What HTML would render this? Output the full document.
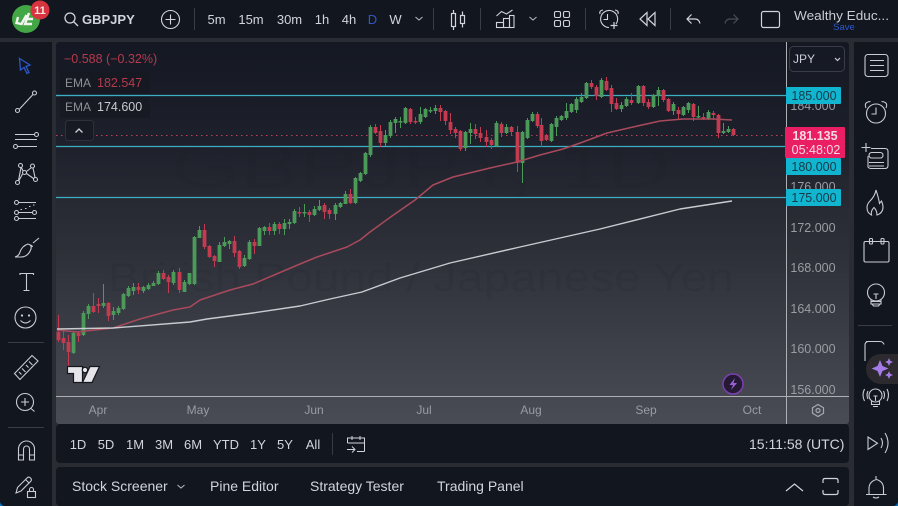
<!DOCTYPE html>
<html>
<head>
<meta charset="utf-8">
<style>
html,body{margin:0;padding:0;width:898px;height:506px;overflow:hidden;background:#2a2c34}
svg{display:block}
text{font-family:"Liberation Sans",sans-serif}
</style>
</head>
<body>
<svg width="898" height="506" viewBox="0 0 898 506" xmlns="http://www.w3.org/2000/svg">
<defs>
<linearGradient id="bg" x1="0" y1="42" x2="0" y2="424" gradientUnits="userSpaceOnUse">
<stop offset="0" stop-color="#141823"/>
<stop offset="0.25" stop-color="#1d202a"/>
<stop offset="0.55" stop-color="#2e3039"/>
<stop offset="0.8" stop-color="#3d3f49"/>
<stop offset="1" stop-color="#494b55"/>
</linearGradient>
</defs>
<rect width="898" height="506" fill="#2a2c34"/>
<!-- panels -->
<rect x="0" y="0" width="898" height="38" fill="#12161f"/>
<rect x="0" y="42" width="52" height="464" fill="#12161f"/>
<rect x="854" y="42" width="44" height="464" fill="#12161f"/>
<rect x="56" y="42" width="793" height="382" rx="3" fill="url(#bg)"/>
<rect x="56" y="424" width="793" height="39" rx="4" fill="#12161f"/>
<rect x="56" y="467" width="793" height="39" rx="4" fill="#12161f"/>
<path d="M0 502q1 3 4 4H0z" fill="#0b6fb8"/>
<path d="M898 502q-1 3-4 4h4z" fill="#0b6fb8"/>

<!-- watermark -->
<g fill="#000" text-anchor="middle">
<text x="421" y="188" font-size="62" fill-opacity=".025" textLength="500" lengthAdjust="spacingAndGlyphs">GBPJPY, 1D</text>
<text x="421" y="291" font-size="40" fill-opacity=".045" textLength="626" lengthAdjust="spacingAndGlyphs">British Pound / Japanese Yen</text>
</g>

<!-- horizontal levels -->
<path d="M56 95.5H786M56 146.5H786M56 197.5H786" stroke="#3eaec4" stroke-width="1.2" fill="none"/>
<path d="M56 135.5H786" stroke="#c2405f" stroke-width="1" stroke-dasharray="1.5 3.5" fill="none"/>

<!-- candles green -->
<path fill="none" stroke="#4c9a5a" stroke-width="1" d="M73.5 331V354M83.5 311V336M88.5 304V319M103.5 284V308M113.5 307V320M118.5 306V315M123.5 293V310M128.5 286V297M133.5 283V295M143.5 286V293M148.5 283V290M153.5 281V286M158.5 271V285M173.5 270V285M184.5 280V292M189.5 273V285M194.5 236V285M199.5 226V238M219.5 242V262M224.5 237V247M229.5 240V249M244.5 255V267M249.5 240V260M259.5 227V246M264.5 226V235M274.5 222V235M284.5 219V235M289.5 219V229M294.5 209V224M304.5 204V217M314.5 206V216M319.5 200V211M335.5 203V220M340.5 202V208M345.5 191V204M355.5 177V204M360.5 172V182M365.5 152V175M370.5 125V157M385.5 130V146M390.5 120V138M395.5 117V133M400.5 117V128M405.5 107V124M420.5 107V124M425.5 108V118M430.5 107V113M435.5 105V114M465.5 131V151M470.5 123V144M496.5 121V147M506.5 124V134M522.5 131V183M527.5 118V139M532.5 112V122M551.5 123V142M556.5 116V136M561.5 115V121M566.5 103V120M571.5 103V113M576.5 97V113M581.5 93V103M586.5 82V99M601.5 78V98M621.5 102V112M626.5 97V107M638.5 85V104M653.5 94V108M658.5 87V106M673.5 102V115M683.5 106V116M688.5 102V113M698.5 106V118M708.5 110V120M723.5 123V134M728.5 126V133"/>
<path fill="none" stroke="#4c9a5a" stroke-width="3.8" d="M73.5 333V353M83.5 313V335M88.5 306V314M103.5 303V306M113.5 311V315M118.5 308V313M123.5 294V309M128.5 288V296M133.5 287V291M143.5 287V291M148.5 285V289M153.5 283V286M158.5 273V284M173.5 272V283M184.5 282V292M189.5 273V284M194.5 237V284M199.5 230V238M219.5 245V262M224.5 242V246M229.5 241V244M244.5 258V266M249.5 242V259M259.5 228V246M264.5 227V231M274.5 224V231M284.5 223V229M289.5 222V224M294.5 211V223M304.5 212V213.5M314.5 209V215M319.5 206V210M335.5 205V214M340.5 203V207M345.5 194V204M355.5 178V203M360.5 173V181M365.5 153V174M370.5 127V155M385.5 135V143M390.5 122V136M395.5 119V123M400.5 121V122.5M405.5 108V123M420.5 114V122M425.5 109V117M430.5 110V111.5M435.5 108V111M465.5 132V148M470.5 129V133M496.5 123V146M506.5 127V133M522.5 132V163M527.5 120V138M532.5 114V121M551.5 124V141M556.5 118V127M561.5 116V120M566.5 111V118M571.5 104V112M576.5 99V110M581.5 97V102M586.5 83V98M601.5 80V97M621.5 105V109M626.5 99V106M638.5 86V103M653.5 95V107M658.5 90V96M673.5 104V111M683.5 107V115M688.5 103V110M698.5 116V117.5M708.5 112V119M723.5 131V133M728.5 129V132"/>
<!-- candles red -->
<path fill="none" stroke="#c43a50" stroke-width="1" d="M58.5 315V342M63.5 331V350M68.5 335V367M78.5 331V342M93.5 293V313M98.5 298V313M108.5 302V321M138.5 283V294M163.5 270V280M168.5 275V293M179.5 268V293M204.5 224V249M209.5 245V258M214.5 255V267M234.5 236V257M239.5 250V269M254.5 239V254M269.5 223V235M279.5 222V234M299.5 207V217M309.5 210V222M324.5 203V219M329.5 208V219M350.5 189V204M375.5 124V134M380.5 125V147M410.5 108V124M415.5 117V124M440.5 105V121M445.5 110V125M450.5 113V134M455.5 127V138M460.5 130V151M475.5 124V139M480.5 127V142M486.5 130V147M491.5 138V149M501.5 122V137M511.5 126V135M517.5 126V172M537.5 112V128M541.5 118V147M546.5 134V141M591.5 80V89M596.5 85V100M606.5 77V91M611.5 85V112M616.5 98V110M631.5 93V105M643.5 85V106M648.5 99V109M663.5 89V102M668.5 98V112M678.5 107V120M693.5 103V121M703.5 113V120M713.5 111V120M718.5 114V138M733.5 128V136"/>
<path fill="none" stroke="#c43a50" stroke-width="3.8" d="M58.5 332V340M63.5 338V343M68.5 342V352M78.5 333V336M93.5 306V312M98.5 304V306M108.5 303V316M138.5 287V290M163.5 273V279M168.5 277V282M179.5 272V290M204.5 230V247M209.5 246V257M214.5 256V261M234.5 241V253M239.5 251V267M254.5 242V246M269.5 227V231M279.5 224V229M299.5 212V213.5M309.5 212V215M324.5 205V212M329.5 210V214M350.5 194V203M375.5 127V133M380.5 131V143M410.5 109V122M415.5 121V122.5M440.5 108V112M445.5 111V121M450.5 122V130M455.5 129V133M460.5 131V149M475.5 129V134M480.5 133V138M486.5 137V142M491.5 140V145M501.5 124V133M511.5 127V132M517.5 132V163M537.5 114V126M541.5 125V141M546.5 135V140M591.5 83V87M596.5 87V96M606.5 81V90M611.5 88V104M616.5 103V109M631.5 100V103M643.5 86V103M648.5 102V107M663.5 90V100M668.5 99V111M678.5 110V114M693.5 104V117M703.5 117V119M713.5 113V115M718.5 115V133M733.5 129V135"/>

<!-- EMAs -->
<path fill="none" stroke="#a94a5c" stroke-width="1.5" stroke-linejoin="round" d="M57 330L77 332L113 328L140 319L173 310L190 307L200 300L230 290L253 284L300 264L317 257L347 247L360 240L370 232L392 216L415 200L433 185L453 177L490 168L517 162L540 155L563 149L583 142L607 133L633 127L660 121L683 119L713 119L732 120"/>
<path fill="none" stroke="#c9cbd0" stroke-width="1.4" stroke-linejoin="round" d="M57 329L113 328L190 322L207 319L253 313L300 306L330 299L362 292L400 278L450 263L520 247L600 229L680 209L732 201"/>

<!-- axis lines -->
<path d="M56 396.500H849M786.500 42V424" stroke="#aeb0b6" stroke-width="1" fill="none"/>

<!-- axis labels -->
<g font-size="12.500" fill="#9b9da3" text-anchor="middle">
<text x="813" y="110">184.000</text>
<text x="813" y="191">176.000</text>
<text x="813" y="232">172.000</text>
<text x="813" y="272">168.000</text>
<text x="813" y="313">164.000</text>
<text x="813" y="353">160.000</text>
<text x="813" y="394">156.000</text>
</g>
<g fill="#12b5d0">
<rect x="786" y="87" width="55" height="17" rx="1"/>
<rect x="786" y="158" width="55" height="17" rx="1"/>
<rect x="786" y="189" width="55" height="17" rx="1"/>
</g>
<g font-size="12.500" fill="#173a46" text-anchor="middle">
<text x="814" y="100">185.000</text>
<text x="814" y="171">180.000</text>
<text x="814" y="202">175.000</text>
</g>
<rect x="785" y="127" width="60" height="31" rx="1" fill="#e91e63"/>
<text x="815" y="140" font-size="12.500" font-weight="bold" fill="#f4dbe3" text-anchor="middle">181.135</text>
<text x="816" y="154" font-size="12.500" fill="#f4dbe3" text-anchor="middle">05:48:02</text>

<rect x="789.500" y="46.500" width="55" height="25" rx="4" fill="none" stroke="#3a3d47"/>
<text x="793" y="63" font-size="12" fill="#c9ccd3">JPY</text>
<path d="M835 58l2.500 2.500 2.500-2.500" fill="none" stroke="#c9ccd3" stroke-width="1.200"/>

<!-- legend -->
<rect x="60" y="72" width="90" height="46" fill="#15181f" fill-opacity=".55"/>
<path d="M56 95.500H150" stroke="#3eaec4" stroke-width="1.200"/>
<text x="64" y="63" font-size="12.500" fill="#b53a4d">−0.588 (−0.32%)</text>
<text x="65" y="87" font-size="12" fill="#8e9096">EMA</text>
<text x="97" y="87" font-size="12.500" fill="#b53a4d">182.547</text>
<text x="65" y="111" font-size="12" fill="#8e9096">EMA</text>
<text x="97" y="111" font-size="12.500" fill="#c8cad0">174.600</text>
<rect x="65.500" y="120.500" width="28" height="20" rx="3" fill="#171a22" stroke="#2e313a"/>
<path d="M75.500 132.500l3.500-3.500 3.500 3.500" fill="none" stroke="#d1d4dc" stroke-width="1.300"/>

<!-- TV logo -->
<g fill="#e6e6ea" stroke="#15171e" stroke-width="1.200">
<path d="M67.500 366.500H82.500V382.500H73.500V373.500H67.500Z"/>
<circle cx="85" cy="370" r="2.700"/>
<path d="M90 366.500H99.500L92 382.500H82.500Z"/>
</g>
<!-- purple bolt -->
<circle cx="733" cy="384" r="10" fill="#241a33" stroke="#7d3fb0" stroke-width="1.500"/>
<path d="M735 378L729.500 385H733L731 390L737 383H733.500Z" fill="#9c5fd6"/>

<!-- time axis -->
<g font-size="12" fill="#9a9ca3" text-anchor="middle">
<text x="98" y="414">Apr</text>
<text x="198" y="414">May</text>
<text x="314" y="414">Jun</text>
<text x="424" y="414">Jul</text>
<text x="531" y="414">Aug</text>
<text x="646" y="414">Sep</text>
<text x="752" y="414">Oct</text>
</g>
<path d="M818 404.500l5.500 3.200v5.600l-5.500 3.200-5.500-3.200v-5.600z" fill="none" stroke="#a5a7ad" stroke-width="1.200"/>
<circle cx="818" cy="410.500" r="2" fill="none" stroke="#a5a7ad" stroke-width="1.200"/>

<!-- range bar -->
<g font-size="13" fill="#d1d4dc" text-anchor="middle">
<text x="78" y="449">1D</text>
<text x="106" y="449">5D</text>
<text x="135" y="449">1M</text>
<text x="164" y="449">3M</text>
<text x="193" y="449">6M</text>
<text x="226" y="449">YTD</text>
<text x="258" y="449">1Y</text>
<text x="285" y="449">5Y</text>
<text x="313" y="449">All</text>
</g>
<path d="M332.500 433V455" stroke="#373a44"/>
<g fill="none" stroke="#d1d4dc" stroke-width="1">
<path d="M352 438H347.500V443M347.500 443H364.500M364.500 451.500V438H360M352 436V440M360 436V440M352 438H360"/>
<path d="M347 449.500H355M352 446.500l3 3-3 3M357 451.500H364.500"/>
</g>
<text x="749" y="449" font-size="14" fill="#d1d4dc">15:11:58 (UTC)</text>

<!-- bottom bar -->
<g font-size="14" fill="#d1d4dc">
<text x="72" y="491">Stock Screener</text>
<text x="210" y="491">Pine Editor</text>
<text x="310" y="491">Strategy Tester</text>
<text x="437" y="491">Trading Panel</text>
</g>
<path d="M177.500 485l3.500 3 3.500-3" fill="none" stroke="#aeb1b8" stroke-width="1.100"/>
<path d="M786 491l8.500-7 8.500 7" fill="none" stroke="#d1d4dc" stroke-width="1.200"/>
<path d="M823 483v-2.500q0-2 2-2h11q2 0 2 2v2.500M823 490v2.500q0 2 2 2h11q2 0 2-2v-2.500" fill="none" stroke="#d1d4dc" stroke-width="1.200"/>

<!-- top bar: logo -->
<circle cx="26" cy="19" r="14" fill="#43a745"/>
<path d="M18 17l-1.500 6 5 1 5-9M29 13l-4 11h7M27 19h6" fill="none" stroke="#f2f5ef" stroke-width="2.400"/>
<circle cx="40" cy="10" r="9.500" fill="#d8343f"/>
<text x="40" y="14" font-size="11" font-weight="bold" fill="#f5e6e6" text-anchor="middle">11</text>
<!-- search -->
<circle cx="70" cy="18" r="5" fill="none" stroke="#d1d4dc" stroke-width="1.300"/>
<path d="M73.500 21.500L78 26" stroke="#d1d4dc" stroke-width="1.300"/>
<text x="82" y="24" font-size="13" font-weight="bold" fill="#d1d4dc">GBPJPY</text>
<!-- plus -->
<circle cx="170.500" cy="19.500" r="9" fill="none" stroke="#d1d4dc" stroke-width="1.100"/>
<path d="M170.500 14.500v10M165.500 19.500h10" stroke="#d1d4dc" stroke-width="1.100"/>
<path d="M194.500 8V30M433.500 8V30M480.500 8V30M585.500 8V30M670.500 8V30" stroke="#3a3d47"/>
<g font-size="13" fill="#d1d4dc" text-anchor="middle">
<text x="216.500" y="24">5m</text>
<text x="251" y="24">15m</text>
<text x="289.500" y="24">30m</text>
<text x="322" y="24">1h</text>
<text x="349" y="24">4h</text>
<text x="372.500" y="24" fill="#2f57c9">D</text>
<text x="395.500" y="24">W</text>
</g>
<path d="M415.500 17l3.500 3 3.500-3M529.500 17l3.500 3 3.500-3" fill="none" stroke="#aeb1b8" stroke-width="1.100"/>
<!-- candle icon -->
<g fill="none" stroke="#d1d4dc" stroke-width="1.200">
<rect x="451.500" y="13.500" width="4" height="13"/><path d="M453.500 10v3.500M453.500 26.500V30"/>
<rect x="460.500" y="15.500" width="4" height="8"/><path d="M462.500 11.500v4M462.500 23.500v4"/>
</g>
<!-- indicators -->
<g fill="none" stroke="#d1d4dc" stroke-width="1.100">
<path d="M496.500 16l5-4.500 5 2.500 6-4"/>
<rect x="496.500" y="22.500" width="7" height="5"/>
<rect x="503.500" y="18.500" width="6" height="9"/>
<rect x="509.500" y="15.500" width="4.500" height="12"/>
<rect x="554.500" y="11.500" width="6" height="6" rx="1.500"/>
<rect x="563.500" y="11.500" width="6" height="6" rx="1.500"/>
<rect x="554.500" y="20.500" width="6" height="6" rx="1.500"/>
<rect x="563.500" y="20.500" width="6" height="6" rx="1.500"/>
<!-- alarm plus -->
<path d="M616 24A8.500 8.500 0 1 0 609 27.500"/>
<path d="M607.500 14v5.500h-4M600 14q-1-3.500 3-4M615 10q4 .5 3 4"/>
<path d="M614 22v7M610.500 25.500h7" stroke-width="1.200"/>
<!-- replay -->
<path d="M647 12.500v13l-7-6.500zM655 12.500v13l-7-6.500z" stroke-width="1.200"/>
<!-- undo/redo -->
<path d="M687 19h8q4 0 5 4.500M691.500 14.500L687 19l4.500 4.500" stroke-width="1.200"/>
<path d="M738 19h-8q-4 0-5 4.500M733.500 14.500L738 19l-4.500 4.500" stroke="#4a4d57" stroke-width="1.200"/>
<rect x="761.500" y="11.500" width="18" height="16" rx="2" stroke-width="1.200"/>
</g>
<text x="794" y="20" font-size="13" fill="#c9ccd3" textLength="95" lengthAdjust="spacingAndGlyphs">Wealthy Educ...</text>
<text x="844" y="30" font-size="9.500" fill="#2f57c9" text-anchor="middle">Save</text>

<!-- left toolbar -->
<path d="M19.500 58.500l10.500 6.500-4 1.500 3 6-2 1-3-6-3.500 2.500z" fill="none" stroke="#2f57c9" stroke-width="1.300"/>
<g fill="none" stroke="#c9ccd3" stroke-width="1.100">
<path d="M19.500 109L33 94.500"/><circle cx="17.500" cy="110.500" r="2"/><circle cx="34.500" cy="93" r="2"/>
<path d="M15 134.500H34M15 139.500H37M18 146.500H37"/>
<circle cx="36.500" cy="134.500" r="2"/><circle cx="15.500" cy="146.500" r="2"/>
<!-- pattern -->
<circle cx="20.500" cy="165.500" r="2"/><circle cx="32.500" cy="166" r="2"/><circle cx="24.500" cy="172.500" r="2"/><circle cx="17.500" cy="182.500" r="2"/><circle cx="35.500" cy="179.500" r="2"/>
<path d="M18.500 180.500L21 167.500M23 171L21.500 167.500M26.500 171.500L31.500 167.500M33 168L35 177.500M22.500 174L19 180.500M26.500 173.500L33.500 178.500"/>
<!-- fib channels -->
<circle cx="16.500" cy="202.500" r="2"/><circle cx="16.500" cy="212.500" r="2"/><circle cx="16.500" cy="218.500" r="2"/><circle cx="34.500" cy="212.500" r="2"/>
<path d="M18.500 202.500H36M18.500 212.500H32.500M18.500 218.500H36"/>
<path d="M20.500 209.500H22M25 208.500H26.500M29 206.500H30.500M33 205H34.500" stroke-width="1"/>
<!-- brush -->
<path d="M15 257q4-1 5-5 2-6 8-8 4 1 3 5-3 8-10 8zM30 245q2 0 2.500 2M33 243l6-5"/>
<!-- T -->
<path d="M20 275v-1.500H33.500V275M26.500 273.500V290.500M23.500 290.500H29.500"/>
<!-- smile -->
<circle cx="25.500" cy="317.500" r="10.500"/>
<path d="M20.500 320.500q5 5 10 0"/>
<circle cx="22" cy="315.500" r=".6"/><circle cx="29" cy="315.500" r=".6"/>
<!-- ruler -->
<path d="M14.500 373.500L32 355.500l6 5.500L20 379.500z"/>
<path d="M19 372l2.500 2.500M22 368.500l3.500 3.500M26 365l2.500 2.500M29 361.500l3.500 3.500"/>
<!-- zoom -->
<circle cx="25" cy="402" r="8.500"/><path d="M31 408.500L34.500 411.500M25 398v8M21 402h8"/>
<!-- magnet -->
<path d="M18.500 460v-11a8 8 0 0 1 16 0v11h-5v-11a3 3 0 0 0-6 0v11zM18.500 455h5M29.500 455h5"/>
<!-- pencil lock -->
<path d="M16 493l1.500-5.500 10-10q1.500-1 3 .5t.5 3l-10 10zM25.500 479.500l4 4"/>
<rect x="27.500" y="491.500" width="8" height="6"/><path d="M29.500 491.500v-2a2 2 0 0 1 4 0v2"/>
</g>
<path d="M8 342.500H44M8 427.500H44" stroke="#3a3d47"/>

<!-- right toolbar -->
<g fill="none" stroke="#c9ccd3" stroke-width="1.100">
<rect x="865" y="54.500" width="23" height="22" rx="3"/>
<path d="M870 60.500H884M870 65.500H884M870 70.500H884"/>
<circle cx="876" cy="113.500" r="9.500"/>
<path d="M876 107.500v6.500h-4.500M866 108q-2.500-6 4.500-6.500M886 108q2.500-6-4.500-6.500"/>
<path d="M871 148.500h14q3 0 3 3v14q0 3-3 3h-14q-2 0-3-1.500v-11"/>
<rect x="869" y="152.500" width="14" height="5.500" rx="2.700"/>
<path d="M869 162.500H884M869 166H884M861.500 147.500h9M866 143v9"/>
<path d="M876 190q-1 6-6 11-3 3-3 6.500 0 5.500 4.500 7.500-1-4 2.500-7.500 3 3 3 7.500 6-2 6-8 0-3-1.500-6l-2 2.500q-1-6-3.500-13.500z"/>
<path d="M864.500 241.500h23q1.500 0 1.500 1.500v17.500q0 1.500-1.500 1.500h-22q-1.500 0-1.500-1.500V243q0-1.500 1.500-1.500z"/>
<rect x="869.500" y="238.500" width="3" height="5.500" rx="1"/><rect x="881" y="238.500" width="3" height="5.500" rx="1"/>
<circle cx="876" cy="292.500" r="8.500"/>
<path d="M871 299v5h10v-5M872 304l1.500 2h5l1.500-2M873.500 294h5M876 294v5M871 301.500H881"/>
<path d="M866 341.500h14q3 0 4 3M865 361V345q0-3 3-3.500"/>
<!-- bulb wave -->
<circle cx="875.500" cy="395.500" r="6.500"/>
<path d="M871.500 401v3.500h8V401M873 406.500h5M873.500 396h4M875.500 396v5M864.500 389q-3 6 0 12M868 391q-2 4 0 8M887 389q3 6 0 12M883.500 391q2 4 0 8"/>
<!-- play wave -->
<path d="M868 437v12.500l9.500-6.250z"/>
<path d="M881 438q3 5 0 10M885 433q6 10 0 20"/>
<!-- bell -->
<path d="M866 494.500h20.500M869 494.500v-6q0-7 7.500-9 7 2 7 9v6M876 476v3M873 497q3 2 6 0"/>
</g>
<path d="M858 325.500H892" stroke="#3a3d47"/>
<path d="M898 354h-17a15 15 0 0 0 0 30h17z" fill="#2c2a2f"/>
<path d="M880 360l2.500 6 6 2.500-6 2.500-2.500 6-2.500-6-6-2.500 6-2.500zM889 358l1.200 2.800 2.800 1.200-2.800 1.200-1.200 2.800-1.200-2.800-2.800-1.200 2.800-1.200zM889 371l1.200 2.800 2.800 1.200-2.800 1.200-1.200 2.800-1.200-2.800-2.800-1.200 2.800-1.200z" fill="#a47be8"/>
</svg>
</body>
</html>
